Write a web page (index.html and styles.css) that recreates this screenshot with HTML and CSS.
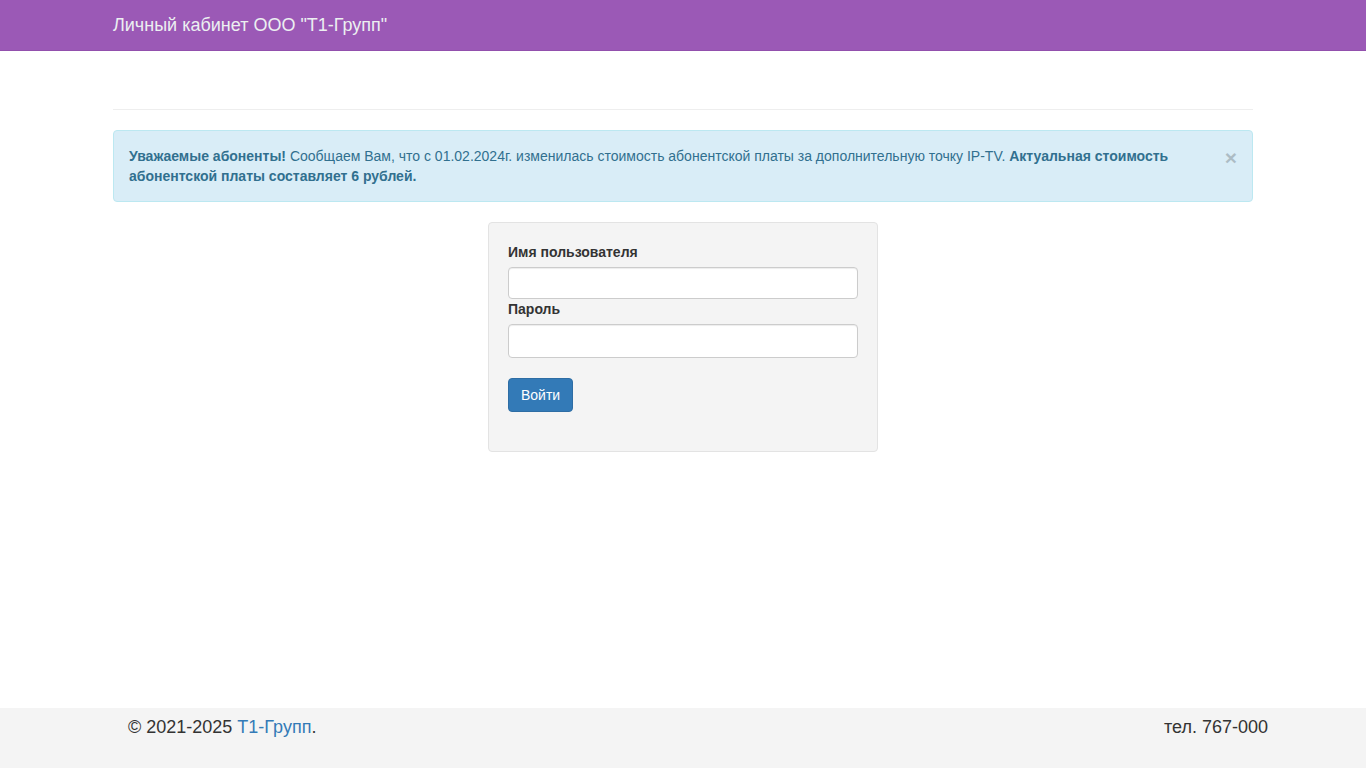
FILE: index.html
```html
<!DOCTYPE html>
<html lang="ru">
<head>
    <meta charset="UTF-8">
    <meta name="viewport" content="width=device-width, initial-scale=1.0">
    <title>Личный кабинет ООО "Т1-Групп"</title>
    <link rel="stylesheet" href="styles.css">
</head>
<body>
    <nav class="navbar">
        <div class="container">
            <a class="navbar-brand" href="#">Личный кабинет ООО "Т1-Групп"</a>
        </div>
    </nav>

    <main class="container">
        <div class="page-header"></div>

        <div class="alert">
            <div class="alert-text">
                <strong>Уважаемые абоненты!</strong> Сообщаем Вам, что с 01.02.2024г. изменилась стоимость абонентской платы за дополнительную точку IP-TV. <strong>Актуальная стоимость абонентской платы составляет 6 рублей.</strong>
            </div>
            <button class="close" type="button">&times;</button>
        </div>

        <div class="well">
            <form>
                <label for="username">Имя пользователя</label>
                <input class="form-control first" id="username" type="text">
                <label for="password">Пароль</label>
                <input class="form-control" id="password" type="password">
                <button class="btn" type="button">Войти</button>
            </form>
        </div>
    </main>

    <footer>
        <div class="footer-row">
            <p>&copy; 2021-2025 <a href="#">Т1-Групп</a>.</p>
            <p>тел. 767-000</p>
        </div>
    </footer>
</body>
</html>
```

FILE: styles.css
```css
* {
    box-sizing: border-box;
}

body {
    font-family: "Liberation Sans", Arial, sans-serif;
    font-size: 14px;
    line-height: 20px;
    color: #333;
    margin: 0;
    min-height: 100vh;
    display: flex;
    flex-direction: column;
    background: #fff;
}

a {
    color: #337ab7;
    text-decoration: none;
}

.container {
    width: 1140px;
    margin: 0 auto;
}

.navbar {
    background-color: #9b59b6;
    border-bottom: 1px solid #9250ad;
    height: 51px;
}

.navbar-brand {
    display: block;
    font-size: 18px;
    line-height: 20px;
    padding: 15px 0;
    color: #ecf0f1;
}

.page-header {
    padding-top: 58px;
    border-bottom: 1px solid #eee;
    margin-bottom: 20px;
}

.alert {
    display: flex;
    align-items: flex-start;
    padding: 15px;
    background-color: #d9edf7;
    border: 1px solid #bce8f1;
    border-radius: 4px;
    color: #31708f;
    margin-bottom: 20px;
}

.alert-text {
    flex: 1;
    padding-right: 20px;
}

.close {
    background: none;
    border: 0;
    padding: 0;
    font-family: "Liberation Sans", Arial, sans-serif;
    font-size: 21px;
    font-weight: bold;
    line-height: 1;
    color: #000;
    opacity: 0.2;
    cursor: pointer;
    margin-top: 1px;
}

.well {
    width: 390px;
    margin: 0 auto;
    padding: 19px 19px 39px;
    background-color: #f4f4f4;
    border: 1px solid #e3e3e3;
    border-radius: 4px;
}

.well form {
    display: flex;
    flex-direction: column;
    align-items: flex-start;
}

label {
    font-weight: bold;
    margin-bottom: 5px;
}

.form-control {
    width: 100%;
    height: 34px;
    padding: 6px 12px;
    font-size: 14px;
    border: 1px solid #ccc;
    border-radius: 4px;
    background: #fff;
    box-shadow: inset 0 1px 1px rgba(0, 0, 0, 0.075);
}

.form-control.first {
    height: 32px;
}

.btn {
    margin-top: 20px;
    padding: 6px 12px;
    font-family: "Liberation Sans", Arial, sans-serif;
    font-size: 14px;
    line-height: 20px;
    color: #fff;
    background-color: #337ab7;
    border: 1px solid #2e6da4;
    border-radius: 4px;
    cursor: pointer;
}

footer {
    margin-top: auto;
    height: 60px;
    background-color: #f4f4f4;
}

.footer-row {
    width: 1170px;
    margin: 0 auto;
    display: flex;
    justify-content: space-between;
    padding: 6px 0 0 30px;
}

.footer-row p {
    margin: 0;
    font-size: 18px;
    line-height: 26px;
}
```
